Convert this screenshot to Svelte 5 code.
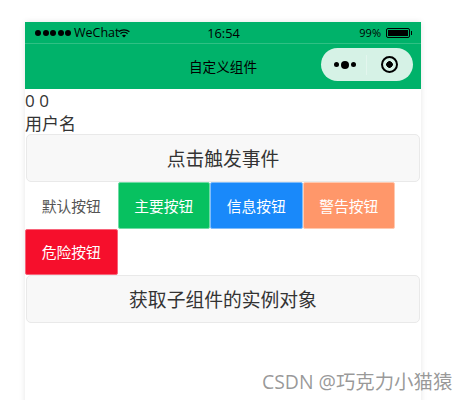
<script>
  let count = 0;
  let total = 0;
  const kinds = [
    { label: '默认按钮', cls: 'default' },
    { label: '主要按钮', cls: 'primary' },
    { label: '信息按钮', cls: 'info' },
    { label: '警告按钮', cls: 'warning' },
    { label: '危险按钮', cls: 'danger' },
  ];
</script>

<div class="page">
  <div class="phone">
    <header class="head">
      <div class="status">
        <div class="carrier">
          <span class="dots">
            {#each [0, 1, 2, 3, 4] as d (d)}<i></i>{/each}
          </span>
          <span class="name">WeChat</span>
          <svg class="wifi" width="12" height="9" viewBox="0 0 12 9">
            <path d="M0.6 2.8C3.6 0.2 8.4 0.2 11.4 2.8" fill="none" stroke="#000" stroke-width="1.2" />
            <path d="M2.4 4.7C4.4 3 7.6 3 9.6 4.7" fill="none" stroke="#000" stroke-width="1.2" />
            <path d="M4 6.4L6 8.6L8 6.4C6.8 5.5 5.2 5.5 4 6.4Z" fill="#000" />
          </svg>
        </div>
        <span class="time">16:54</span>
        <div class="battery">
          <span>99%</span>
          <span class="cell"><b></b></span>
          <span class="tip"></span>
        </div>
      </div>
      <div class="nav">
        <span class="title">自定义组件</span>
        <div class="capsule">
          <div class="more"><i></i><i class="big"></i><i></i></div>
          <span class="sep"></span>
          <div class="target"><i></i></div>
        </div>
      </div>
    </header>

    <div class="line">{count} {total}</div>
    <div class="line">用户名</div>
    <button class="wide">点击触发事件</button>
    <div class="btns">
      {#each kinds as k (k.cls)}
        <button class="mini {k.cls}">{k.label}</button>
      {/each}
    </div>
    <button class="wide">获取子组件的实例对象</button>
  </div>
  <div class="mark">CSDN @巧克力小猫猿</div>
</div>

<style>
  :global(body) {
    margin: 0;
    background: #fff;
  }

  .page {
    height: 400px;
    overflow: hidden;
    padding: 22px 0 0 25px;
    box-sizing: border-box;
    position: relative;
    font-family: "Open Sans", "Noto Sans CJK SC", sans-serif;
  }

  .phone {
    width: 396px;
    height: 400px;
    background: #fff;
    box-shadow: 0 0 6px rgba(0, 0, 0, 0.1);
    color: #222;
  }

  .head {
    background: #00b26a;
    color: #000;
    height: 67px;
  }

  .status {
    height: 21px;
    border-bottom: 1px solid #2fc084;
    display: grid;
    grid-template-columns: 1fr auto 1fr;
    align-items: center;
    padding: 0 9px 0 10px;
  }

  .carrier {
    display: flex;
    align-items: center;
    gap: 3px;
  }

  .dots {
    display: flex;
    gap: 1.5px;
  }

  .dots i {
    width: 6px;
    height: 6px;
    border-radius: 50%;
    background: #000;
  }

  .name {
    font-size: 12.5px;
    margin-right: -5px;
  }

  .wifi {
    margin-top: 1px;
  }

  .time {
    font-size: 12.8px;
  }

  .battery {
    display: flex;
    align-items: center;
    justify-content: flex-end;
    font-size: 11px;
  }

  .cell {
    width: 24px;
    height: 10px;
    border: 1px solid #000;
    border-radius: 2px;
    margin-left: 5px;
    padding: 1px;
    box-sizing: border-box;
    display: flex;
  }

  .cell b {
    flex: 1;
    background: #000;
  }

  .tip {
    width: 1px;
    height: 4px;
    margin-left: 1px;
    background: #000;
  }

  .nav {
    height: 45px;
    display: flex;
    align-items: center;
    justify-content: center;
    position: relative;
  }

  .title {
    font-size: 13.6px;
    margin-top: -2px;
  }

  .capsule {
    position: absolute;
    right: 8px;
    top: 4px;
    width: 92px;
    height: 33px;
    border-radius: 17px;
    background: #d6f2e6;
    display: flex;
    align-items: center;
    box-sizing: border-box;
  }

  .more {
    width: 45px;
    display: flex;
    align-items: center;
    justify-content: center;
    gap: 2px;
    padding-left: 2px;
    box-sizing: border-box;
  }

  .more i {
    width: 5px;
    height: 5px;
    border-radius: 50%;
    background: #000;
  }

  .more .big {
    width: 8px;
    height: 8px;
  }

  .sep {
    width: 1px;
    height: 20px;
    background: #e3f6ee;
  }

  .target {
    flex: 1;
    display: flex;
    align-items: center;
    justify-content: center;
    padding-right: 1px;
  }

  .target i {
    width: 17px;
    height: 17px;
    border: 2.5px solid #000;
    border-radius: 50%;
    box-sizing: border-box;
    background: radial-gradient(circle, #000 3px, transparent 3.6px);
  }

  .line {
    font-size: 17px;
    line-height: 21.5px;
    padding-top: 1px;
    color: #333;
  }

  .wide {
    display: block;
    width: 394px;
    height: 48px;
    margin: 0 1px;
    padding: 0;
    background: #f8f8f8;
    border: 1px solid #e9e9e9;
    border-radius: 5px;
    color: #333;
    font: inherit;
    font-size: 18.8px;
  }

  .btns {
    display: flex;
    flex-wrap: wrap;
    width: 380px;
  }

  .mini {
    width: 92.5px;
    height: 46.5px;
    padding: 0;
    border: 1px solid transparent;
    border-radius: 2px;
    font: inherit;
    font-size: 14.8px;
    color: #fff;
    box-sizing: border-box;
  }

  .default {
    background: #fff;
    color: #555;
    border-color: #fff;
  }

  .primary {
    background: #07c160;
    border-color: #6fdca5;
  }

  .info {
    background: #1989fa;
    border-color: #7fbcfa;
  }

  .warning {
    background: #ff976a;
    border-color: #ffc9b0;
  }

  .danger {
    background: #f60f2c;
    border-color: #f8647a;
  }

  .mark {
    position: absolute;
    left: 262px;
    top: 369px;
    font-size: 19.4px;
    line-height: 26px;
    color: rgba(120, 120, 120, 0.75);
    white-space: nowrap;
  }
</style>
